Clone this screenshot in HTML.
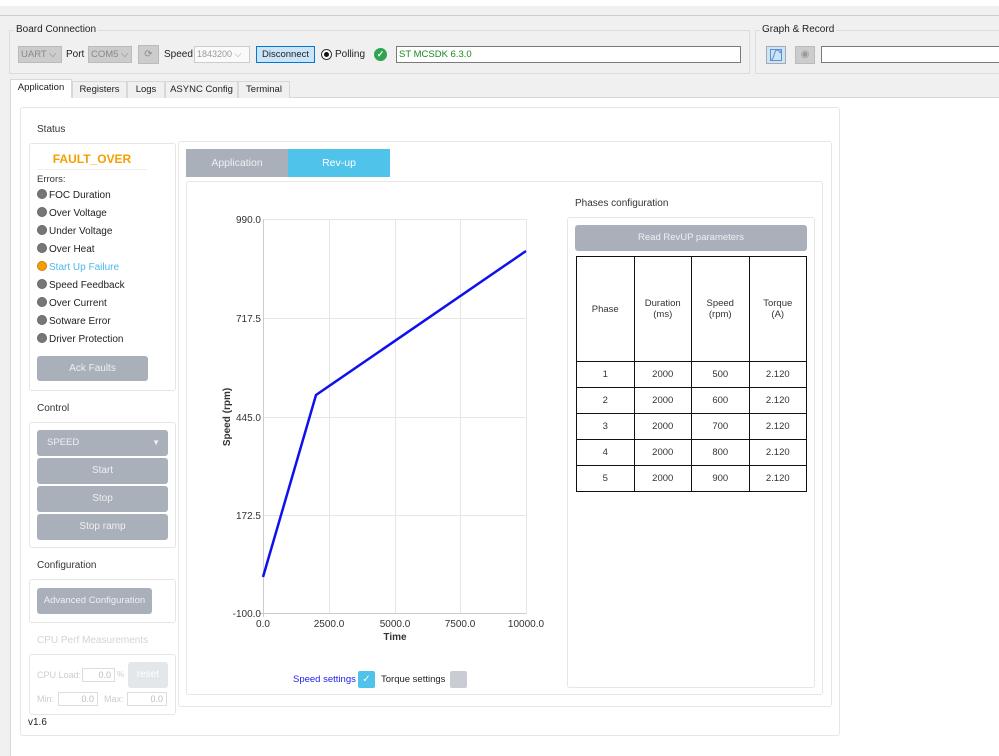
<!DOCTYPE html>
<html><head><meta charset="utf-8"><style>
*{box-sizing:border-box;margin:0;padding:0}
body{width:999px;height:756px;overflow:hidden;background:#f0f0f0;font-family:"Liberation Sans",sans-serif;font-size:10px;color:#222;position:relative}
.a{position:absolute;white-space:nowrap}
.box{position:absolute;border:1px solid #e6e6e6;border-radius:3px;background:#fff}
.btn{position:absolute;background:#a9b0ba;color:#eef0f3;border-radius:3px;text-align:center;font-size:10px;white-space:nowrap}
.dot{display:inline-block;width:10px;height:10px;border-radius:50%;background:#777;border:1px solid #666;vertical-align:-1px;margin-right:2px}
.err{position:absolute;left:37px;font-size:10px;white-space:nowrap}
.inp{position:absolute;border:1px solid #ddd;background:#fff;color:#bbb;text-align:right;font-size:9px;padding-right:3px;height:14px;line-height:12px}
table{border-collapse:collapse;position:absolute;left:576px;top:256px;table-layout:fixed;width:231px}
td{border:1.5px solid #111;text-align:center;font-size:9.5px;color:#333;height:26px}
.tab{position:absolute;top:81px;height:17px;border:1px solid #d8d8d8;border-bottom:none;background:#f0f0f0;font-size:9.5px;text-align:center;line-height:16px;white-space:nowrap}
</style></head><body>
<div class="a" style="left:0;top:0;width:999px;height:6px;background:#fff"></div>
<div class="a" style="left:0;top:15px;width:999px;height:1px;background:#ccc"></div>
<div class="a" style="left:9px;top:30px;width:741px;height:44px;border:1px solid #dcdcdc"></div>
<div class="a" style="left:14px;top:24px;background:#f0f0f0;padding:0 2px;font-size:10px">Board Connection</div>
<div class="a" style="left:18px;top:46px;width:44px;height:17px;background:#ccc;border:1px solid #bbb;color:#888;font-size:9.5px;line-height:15px;padding-left:2px">UART ⌵</div>
<div class="a" style="left:66px;top:49px;font-size:10px">Port</div>
<div class="a" style="left:88px;top:46px;width:44px;height:17px;background:#ccc;border:1px solid #bbb;color:#888;font-size:9.5px;line-height:15px;padding-left:2px">COM5 ⌵</div>
<div class="a" style="left:138px;top:45px;width:21px;height:19px;background:#ccc;border:1px solid #bbb;color:#888;text-align:center;line-height:17px">⟳</div>
<div class="a" style="left:164px;top:49px;font-size:10px">Speed</div>
<div class="a" style="left:194px;top:46px;width:56px;height:17px;background:#fafafa;border:1px solid #ccc;color:#999;font-size:9px;line-height:15px;padding-left:2px">1843200 ⌵</div>
<div class="a" style="left:256px;top:46px;width:59px;height:17px;background:#cce4f7;border:1px solid #0078d7;font-size:9.5px;line-height:15px;text-align:center">Disconnect</div>
<div class="a" style="left:321px;top:49px;width:11px;height:11px;border:1px solid #333;border-radius:50%;background:#fff"><div style="margin:2px;width:5px;height:5px;border-radius:50%;background:#111"></div></div>
<div class="a" style="left:335px;top:49px;font-size:10px">Polling</div>
<div class="a" style="left:374px;top:48px;width:13px;height:13px;border-radius:50%;background:#2ea44f;color:#fff;font-size:9px;line-height:13px;text-align:center;font-weight:bold">✓</div>
<div class="a" style="left:396px;top:46px;width:345px;height:17px;background:#fff;border:1px solid #7a7a7a;color:#1a8a1a;font-size:9.5px;line-height:15px;padding-left:2px">ST MCSDK 6.3.0</div>
<div class="a" style="left:755px;top:30px;width:250px;height:44px;border:1px solid #dcdcdc"></div>
<div class="a" style="left:760px;top:24px;background:#f0f0f0;padding:0 2px;font-size:10px">Graph &amp; Record</div>
<svg class="a" style="left:766px;top:46px" width="20" height="18"><rect x="0.5" y="0.5" width="19" height="17" fill="#cce4f7" stroke="#aaa"/><rect x="4.5" y="3.5" width="11" height="11" fill="none" stroke="#5a8fd0"/><path d="M5 14 C8 14 8 4 11 4 S14 10 15 4" fill="none" stroke="#5a8fd0"/></svg>
<div class="a" style="left:795px;top:46px;width:20px;height:18px;background:#ccc;border:1px solid #bbb;color:#999;text-align:center;line-height:16px">◉</div>
<div class="a" style="left:821px;top:46px;width:180px;height:17px;background:#fff;border:1px solid #7a7a7a"></div>
<div class="a" style="left:10px;top:97px;width:989px;height:659px;background:#fff;border-top:1px solid #d8d8d8;border-left:1px solid #d8d8d8"></div>
<div class="tab" style="left:10px;top:79px;width:62px;height:19px;background:#fff">Application</div>
<div class="tab" style="left:72px;width:55px">Registers</div>
<div class="tab" style="left:127px;width:38px">Logs</div>
<div class="tab" style="left:165px;width:73px">ASYNC Config</div>
<div class="tab" style="left:238px;width:52px">Terminal</div>
<div class="box" style="left:20px;top:107px;width:820px;height:629px"></div>
<div class="a" style="left:37px;top:124px;font-size:10px;color:#333">Status</div>
<div class="box" style="left:29px;top:143px;width:147px;height:248px"></div>
<div class="a" style="left:37px;top:152px;width:110px;text-align:center;font-weight:bold;color:#f5a000;font-size:12px">FAULT_OVER</div>
<div class="a" style="left:37px;top:169px;width:110px;height:1px;background:#eee"></div>
<div class="err" style="top:174px;font-size:9.5px;color:#333">Errors:</div>
<div class="err" style="top:189px"><span class="dot"></span>FOC Duration</div>
<div class="err" style="top:207px"><span class="dot"></span>Over Voltage</div>
<div class="err" style="top:225px"><span class="dot"></span>Under Voltage</div>
<div class="err" style="top:243px"><span class="dot"></span>Over Heat</div>
<div class="err" style="top:261px;color:#4fb8e8"><span class="dot" style="background:#f5a000;border-color:#c88000"></span>Start Up Failure</div>
<div class="err" style="top:279px"><span class="dot"></span>Speed Feedback</div>
<div class="err" style="top:297px"><span class="dot"></span>Over Current</div>
<div class="err" style="top:315px"><span class="dot"></span>Sotware Error</div>
<div class="err" style="top:333px"><span class="dot"></span>Driver Protection</div>
<div class="btn" style="left:37px;top:356px;width:111px;height:25px;line-height:25px">Ack Faults</div>
<div class="a" style="left:37px;top:403px;font-size:10px;color:#333">Control</div>
<div class="box" style="left:29px;top:422px;width:147px;height:126px"></div>
<div class="btn" style="left:37px;top:430px;width:131px;height:26px;line-height:26px;text-align:left;padding-left:10px;font-size:9.5px">SPEED<span style="position:absolute;right:8px;font-size:8px">▼</span></div>
<div class="btn" style="left:37px;top:458px;width:131px;height:26px;line-height:26px">Start</div>
<div class="btn" style="left:37px;top:486px;width:131px;height:26px;line-height:26px">Stop</div>
<div class="btn" style="left:37px;top:514px;width:131px;height:26px;line-height:26px">Stop ramp</div>
<div class="a" style="left:37px;top:560px;font-size:10px;color:#333">Configuration</div>
<div class="box" style="left:29px;top:579px;width:147px;height:44px"></div>
<div class="btn" style="left:37px;top:588px;width:115px;height:26px;line-height:26px;font-size:9.5px">Advanced Configuration</div>
<div class="a" style="left:37px;top:635px;font-size:10px;color:#d0d4da">CPU Perf Measurements</div>
<div class="box" style="left:29px;top:654px;width:147px;height:61px"></div>
<div class="a" style="left:37px;top:670px;font-size:9px;color:#ccc">CPU Load:</div>
<div class="inp" style="left:82px;top:668px;width:33px">0.0</div>
<div class="a" style="left:117px;top:670px;font-size:8px;color:#ccc">%</div>
<div class="a" style="left:128px;top:662px;width:40px;height:26px;background:#e4e7ea;border-radius:3px;color:#fff;text-align:center;line-height:26px;font-size:10px">reset</div>
<div class="a" style="left:37px;top:694px;font-size:9px;color:#ccc">Min:</div>
<div class="inp" style="left:58px;top:692px;width:40px">0.0</div>
<div class="a" style="left:104px;top:694px;font-size:9px;color:#ccc">Max:</div>
<div class="inp" style="left:127px;top:692px;width:40px">0.0</div>
<div class="a" style="left:28px;top:717px;font-size:10px">v1.6</div>
<div class="box" style="left:178px;top:141px;width:654px;height:566px"></div>
<div class="a" style="left:186px;top:149px;width:102px;height:28px;background:#a9b0ba;color:#eef0f3;text-align:center;line-height:28px;font-size:10.5px">Application</div>
<div class="a" style="left:288px;top:149px;width:102px;height:28px;background:#4fc3ea;color:#fff;text-align:center;line-height:28px;font-size:10.5px">Rev-up</div>
<div class="box" style="left:186px;top:181px;width:637px;height:514px"></div>
<svg class="a" style="left:186px;top:181px" width="400" height="480">
<g stroke="#e6e6e6" stroke-width="1" fill="none">
<rect x="77.5" y="38.5" width="263" height="394"/>
<line x1="143.5" y1="38" x2="143.5" y2="432"/><line x1="209.5" y1="38" x2="209.5" y2="432"/><line x1="274.5" y1="38" x2="274.5" y2="432"/>
<line x1="77" y1="137.5" x2="340" y2="137.5"/><line x1="77" y1="236.5" x2="340" y2="236.5"/><line x1="77" y1="334.5" x2="340" y2="334.5"/>
</g>
<g stroke="#ccc"><line x1="77.5" y1="38" x2="77.5" y2="436"/><line x1="73" y1="432.5" x2="340" y2="432.5"/></g>
<polyline points="77,396 130,214 340,70" stroke="#1010ee" stroke-width="2.5" fill="none"/>
<g font-size="10" fill="#333" text-anchor="end" font-family="Liberation Sans">
<text x="75" y="42">990.0</text><text x="75" y="141">717.5</text><text x="75" y="240">445.0</text><text x="75" y="338">172.5</text><text x="75" y="436">-100.0</text></g>
<g font-size="10" fill="#333" text-anchor="middle" font-family="Liberation Sans">
<text x="77" y="446">0.0</text><text x="143" y="446">2500.0</text><text x="209" y="446">5000.0</text><text x="274" y="446">7500.0</text><text x="340" y="446">10000.0</text>
<text x="209" y="459" font-weight="bold">Time</text>
<text transform="translate(44,236) rotate(-90)" font-weight="bold">Speed (rpm)</text></g>
</svg>
<div class="a" style="left:293px;top:674px;color:#2020ee;font-size:9.5px">Speed settings</div>
<div class="a" style="left:358px;top:671px;width:17px;height:17px;background:#4fc3ea;border-radius:2px;color:#fff;text-align:center;line-height:17px;font-size:10px">✓</div>
<div class="a" style="left:381px;top:674px;font-size:9.5px">Torque settings</div>
<div class="a" style="left:450px;top:671px;width:17px;height:17px;background:#c9cdd3;border-radius:2px"></div>
<div class="a" style="left:575px;top:198px;font-size:10px;color:#333">Phases configuration</div>
<div class="box" style="left:567px;top:217px;width:248px;height:471px"></div>
<div class="btn" style="left:575px;top:225px;width:232px;height:26px;line-height:26px;font-size:9.5px">Read RevUP parameters</div>
<table>
<tr><td style="height:105px">Phase</td><td>Duration<br>(ms)</td><td>Speed<br>(rpm)</td><td>Torque<br>(A)</td></tr>
<tr><td>1</td><td>2000</td><td>500</td><td>2.120</td></tr>
<tr><td>2</td><td>2000</td><td>600</td><td>2.120</td></tr>
<tr><td>3</td><td>2000</td><td>700</td><td>2.120</td></tr>
<tr><td>4</td><td>2000</td><td>800</td><td>2.120</td></tr>
<tr><td>5</td><td>2000</td><td>900</td><td>2.120</td></tr>
</table>
</body></html>
